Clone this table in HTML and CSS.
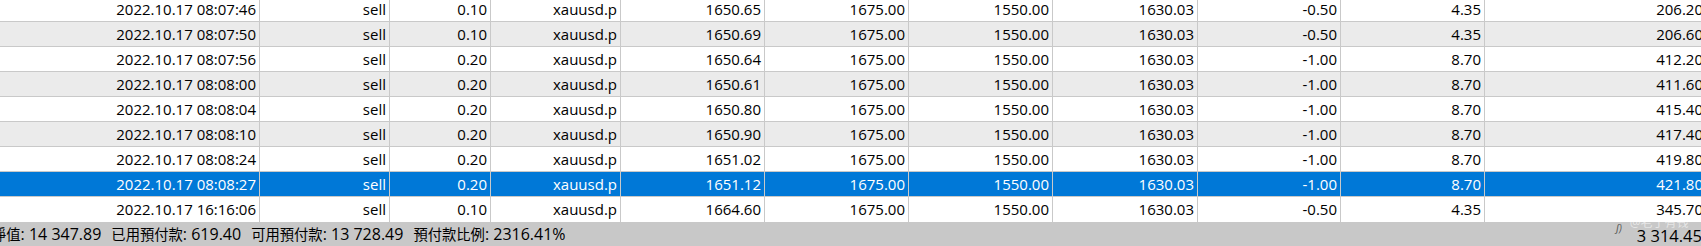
FILE: index.html
```html
<!DOCTYPE html>
<html>
<head>
<meta charset="utf-8">
<link rel="stylesheet" href="styles.css">
</head>
<body>
<div class="screen">
  <div class="grid">
    <div class="row">
      <div class="c">2022.10.17 08:07:46</div><div class="c">sell</div><div class="c">0.10</div><div class="c">xauusd.p</div><div class="c">1650.65</div><div class="c">1675.00</div><div class="c">1550.00</div><div class="c">1630.03</div><div class="c">-0.50</div><div class="c">4.35</div><div class="c">206.20</div>
    </div>
    <div class="row alt">
      <div class="c">2022.10.17 08:07:50</div><div class="c">sell</div><div class="c">0.10</div><div class="c">xauusd.p</div><div class="c">1650.69</div><div class="c">1675.00</div><div class="c">1550.00</div><div class="c">1630.03</div><div class="c">-0.50</div><div class="c">4.35</div><div class="c">206.60</div>
    </div>
    <div class="row">
      <div class="c">2022.10.17 08:07:56</div><div class="c">sell</div><div class="c">0.20</div><div class="c">xauusd.p</div><div class="c">1650.64</div><div class="c">1675.00</div><div class="c">1550.00</div><div class="c">1630.03</div><div class="c">-1.00</div><div class="c">8.70</div><div class="c">412.20</div>
    </div>
    <div class="row alt">
      <div class="c">2022.10.17 08:08:00</div><div class="c">sell</div><div class="c">0.20</div><div class="c">xauusd.p</div><div class="c">1650.61</div><div class="c">1675.00</div><div class="c">1550.00</div><div class="c">1630.03</div><div class="c">-1.00</div><div class="c">8.70</div><div class="c">411.60</div>
    </div>
    <div class="row">
      <div class="c">2022.10.17 08:08:04</div><div class="c">sell</div><div class="c">0.20</div><div class="c">xauusd.p</div><div class="c">1650.80</div><div class="c">1675.00</div><div class="c">1550.00</div><div class="c">1630.03</div><div class="c">-1.00</div><div class="c">8.70</div><div class="c">415.40</div>
    </div>
    <div class="row alt">
      <div class="c">2022.10.17 08:08:10</div><div class="c">sell</div><div class="c">0.20</div><div class="c">xauusd.p</div><div class="c">1650.90</div><div class="c">1675.00</div><div class="c">1550.00</div><div class="c">1630.03</div><div class="c">-1.00</div><div class="c">8.70</div><div class="c">417.40</div>
    </div>
    <div class="row">
      <div class="c">2022.10.17 08:08:24</div><div class="c">sell</div><div class="c">0.20</div><div class="c">xauusd.p</div><div class="c">1651.02</div><div class="c">1675.00</div><div class="c">1550.00</div><div class="c">1630.03</div><div class="c">-1.00</div><div class="c">8.70</div><div class="c">419.80</div>
    </div>
    <div class="row selected">
      <div class="c">2022.10.17 08:08:27</div><div class="c">sell</div><div class="c">0.20</div><div class="c">xauusd.p</div><div class="c">1651.12</div><div class="c">1675.00</div><div class="c">1550.00</div><div class="c">1630.03</div><div class="c">-1.00</div><div class="c">8.70</div><div class="c">421.80</div>
    </div>
    <div class="row last">
      <div class="c">2022.10.17 16:16:06</div><div class="c">sell</div><div class="c">0.10</div><div class="c">xauusd.p</div><div class="c">1664.60</div><div class="c">1675.00</div><div class="c">1550.00</div><div class="c">1630.03</div><div class="c">-0.50</div><div class="c">4.35</div><div class="c">345.70</div>
    </div>
  </div>
  <div class="footer">
    <div class="summary">
      <span><span class="lbl">淨值</span>: 14 347.89</span>
      <span><span class="lbl">已用預付款</span>: 619.40</span>
      <span><span class="lbl">可用預付款</span>: 13 728.49</span>
      <span><span class="lbl">預付款比例</span>: 2316.41%</span>
    </div>
    <div class="total">3 314.45</div>
  </div>
  <div class="watermark"><span class="wm-icon">ʃ)</span><span class="wm-text">@老丁有钱</span></div>
</div>
</body>
</html>
```

FILE: styles.css
```css
html, body {
  margin: 0;
  padding: 0;
  background: #ffffff;
}
.screen {
  position: relative;
  width: 1701px;
  height: 246px;
  overflow: hidden;
  font-family: "Open Sans", "Noto Sans CJK TC", sans-serif;
  font-size: 15px;
  color: #000000;
}
.grid {
  margin-top: -3px;
}
.row {
  display: grid;
  grid-template-columns: 260px 130px 101px 130px 144px 144px 144px 145px 143px 144px 222px;
  height: 24px;
  border-bottom: 1px solid #c9c9c9;
  background: #ffffff;
}
.row.alt {
  background: #ebebeb;
}
.row.selected {
  background: #0078d7;
  color: #ffffff;
}
.row.last {
  border-bottom: none;
  height: 25px;
}
.c {
  box-sizing: border-box;
  border-right: 1px solid #c9c9c9;
  text-align: right;
  padding-right: 3px;
  line-height: 24px;
  white-space: nowrap;
  overflow: hidden;
}
.footer {
  display: flex;
  justify-content: space-between;
  align-items: center;
  height: 24px;
  background: #c8c8c8;
  font-size: 16px;
  line-height: 24px;
}
.summary {
  display: flex;
  gap: 10px;
  margin-left: -8px;
  white-space: nowrap;
  padding-top: 1px;
}
.lbl {
  font-size: 14.3px;
}
.total {
  margin-right: -1px;
  padding-top: 3px;
  font-size: 16.5px;
}
.watermark {
  position: absolute;
  left: 1616px;
  top: 217px;
  display: flex;
  align-items: flex-start;
  gap: 8px;
  font-size: 12px;
  line-height: 12px;
  pointer-events: none;
}
.wm-icon {
  color: #555555;
  font-size: 10px;
  line-height: 10px;
  font-style: italic;
  margin-top: 6px;
}
.wm-text {
  color: rgba(255, 255, 255, 0.55);
}
```
